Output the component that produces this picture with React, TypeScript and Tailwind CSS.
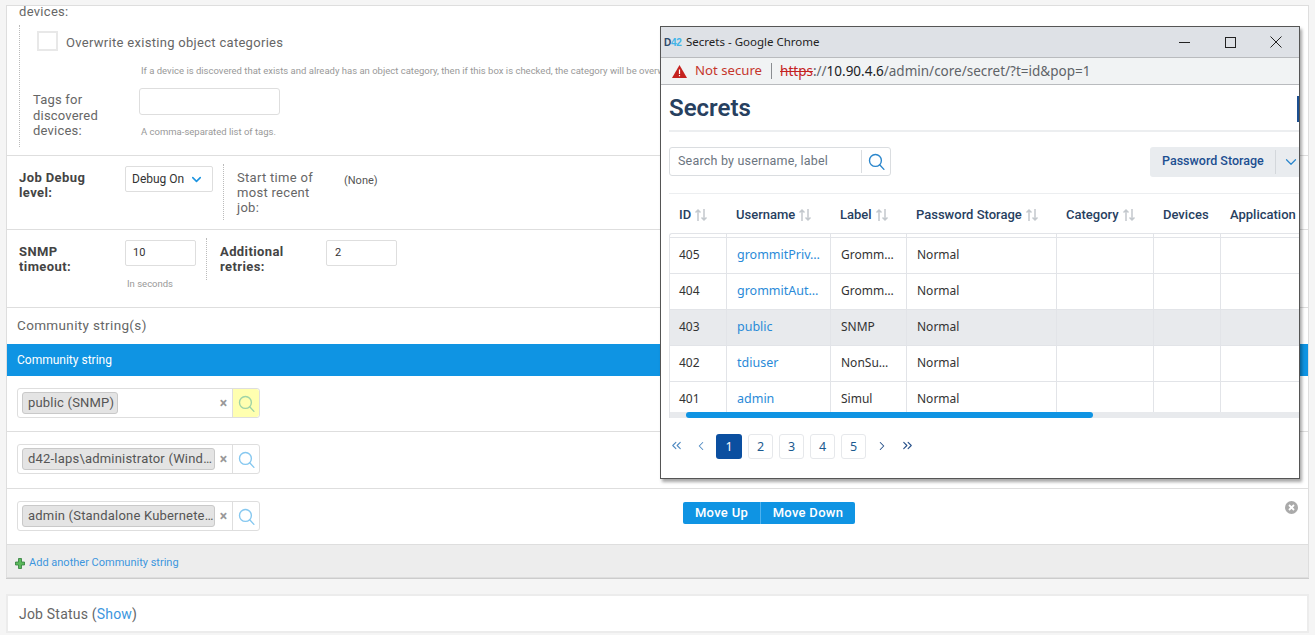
import React from "react";
import { ChevronDown, ChevronsLeft, ChevronLeft, ChevronRight, ChevronsRight } from "lucide-react";

const Glass = ({ className = "" }: { className?: string }) => (
  <svg viewBox="0 0 16 16" width="17" height="17" fill="none" stroke="currentColor" strokeWidth="1.3" className={className}>
    <circle cx="7" cy="7" r="5.6" />
    <path d="M11 11l4 4.4" strokeLinecap="round" />
  </svg>
);

const Sort = () => (
  <span className="inline-flex ml-[3px] text-[#c3c8cd]">
    <svg width="14" height="14" viewBox="0 0 14 14" fill="none" stroke="currentColor" strokeWidth="1.5">
      <path d="M4 13V2M1.5 4.5L4 2l2.5 2.5" />
      <path d="M10 1v11M7.5 9.5L10 12l2.5-2.5" />
    </svg>
  </span>
);

const Lookup = ({ label, yellow, tagW }: { label: string; yellow?: boolean; tagW: string }) => (
  <div className="flex items-stretch w-[243px] h-[30px] border border-[#dedede] rounded-[3px] bg-white shrink-0">
    <div className="flex-1 flex items-center pl-[4px] min-w-0">
      <span className={`${tagW} h-[22px] bg-[#e4e4e4] border border-[#c9c9c9] rounded-[3px] text-[#555] text-[13px] tracking-[0.2px] pl-[5px] flex items-center whitespace-nowrap overflow-hidden`}>{label}</span>
    </div>
    <span className="w-[17px] flex items-center justify-center text-[#999] font-bold text-[14px]">×</span>
    <span className={`w-[27px] flex items-center justify-center border-l border-[#dedede] rounded-r-[3px] ${yellow ? "bg-[#ffffb0] text-[#9fd3a6]" : "text-[#86c8f0]"}`}>
      <Glass />
    </span>
  </div>
);

const rows = [
  ["405", "grommitPriv…", "Gromm…"],
  ["404", "grommitAut…", "Gromm…"],
  ["403", "public", "SNMP"],
  ["402", "tdiuser", "NonSu…"],
  ["401", "admin", "Simul"],
];

const cols = "grid grid-cols-[57px_104px_76px_150px_97px_67px_1fr]";
const headers: [string, boolean][] = [
  ["ID", true],
  ["Username", true],
  ["Label", true],
  ["Password Storage", true],
  ["Category", true],
  ["Devices", false],
  ["Application", false],
];

function Popup() {
  return (
    <div className="absolute left-[660px] top-[26px] w-[640px] h-[453px] bg-white border border-[#555] shadow-[2px_3px_3px_rgba(0,0,0,0.35)] flex flex-col overflow-hidden">
      <div className="h-[31px] bg-[#dee1e6] flex items-center pl-[3px] shrink-0 border-b border-[#b9bbbe]">
        <span className="text-[10px] font-bold font-['Liberation_Sans',sans-serif] w-[19px] tracking-[-0.3px]"><span className="text-[#2d4a6b]">D</span><span className="text-[#3fb4e8]">42</span></span>
        <span className="text-[11.5px] text-[#222] font-['Noto_Sans',sans-serif] ml-[3px]">Secrets - Google Chrome</span>
        <div className="ml-auto flex items-center text-[#222]">
          <svg width="11" height="11" viewBox="0 0 11 11" stroke="currentColor" fill="none" className="mr-[35px]"><path d="M0 5.5h11" /></svg>
          <svg width="11" height="11" viewBox="0 0 11 11" stroke="currentColor" fill="none" className="mr-[34px]"><rect x="0.5" y="0.5" width="10" height="10" /></svg>
          <svg width="12" height="12" viewBox="0 0 12 12" stroke="currentColor" fill="none" className="mr-[17px]"><path d="M0.5 0.5l11 11M11.5 0.5l-11 11" /></svg>
        </div>
      </div>
      <div className="h-[27px] bg-[#f1f3f4] border-b border-[#b9bbbe] flex items-center pl-[11px] shrink-0 font-['Noto_Sans',sans-serif]">
        <svg width="15" height="13" viewBox="0 0 15 13"><path d="M7.5 0L15 13H0z" fill="#c5221f" /><path d="M6.9 4.5h1.2v4.5H6.9zM6.9 10h1.2v1.3H6.9z" fill="#fff" /></svg>
        <span className="text-[#c5362c] ml-[8px] text-[13.2px]">Not secure</span>
        <span className="w-px h-[16px] bg-[#8a8d91] ml-[9px] mr-[8px]" />
        <span className="text-[13.5px] text-[#5f6368] whitespace-nowrap"><span className="text-[#c5221f] line-through">https</span>://<span className="text-[#202124]">10.90.4.6</span>/admin/core/secret/?t=id&amp;pop=1</span>
      </div>
      <div className="flex-1 pl-[8px] relative">
        <div className="absolute right-0 top-[11px] w-[2px] h-[26px] bg-[#1c4f91]" />
        <div className="h-[47px] border-b-2 border-[#eceef0] flex items-center">
          <h1 className="text-[24px] font-semibold text-[#27405f] leading-none">Secrets</h1>
        </div>
        <div className="h-[62px] border-b border-[#eceef0] flex items-center justify-between">
          <div className="w-[222px] h-[29px] border border-[#dadde0] rounded-[3px] flex items-center -mt-[2px]">
            <span className="flex-1 pl-[8px] text-[12.5px] text-[#6b7580] tracking-[0.2px]">Search by username, label</span>
            <span className="w-[29px] h-[23px] border-l border-[#dadde0] flex items-center justify-center text-[#2a86cc]"><Glass /></span>
          </div>
          <div className="w-[149px] h-[30px] -mt-[2px] bg-[#e9ecef] rounded-l-[3px] flex items-center text-[#1c4f91] text-[12.5px] font-medium">
            <span className="w-[126px] h-[24px] shrink-0 pl-[12px] border-r border-[#d3d7db] flex items-center whitespace-nowrap">Password Storage</span>
            <ChevronDown size={18} strokeWidth={1.6} className="ml-[6px] shrink-0 text-[#2a86cc]" />
          </div>
        </div>
        <div className={`${cols} h-[39px] pt-[3px] items-center text-[13px] font-medium text-[#27405f] whitespace-nowrap`}>
          {headers.map(([h, s]) => (
            <div key={h} className="pl-[10px] flex items-center">{h}{s && <Sort />}</div>
          ))}
        </div>
        <div className="border-t border-l border-[#e2e4e8] rounded-tl-[3px]">
          <div className={`${cols} h-[3px]`}>
            {headers.map(([h]) => <div key={h} className="border-r border-[#e2e4e8] last:border-r-0" />)}
          </div>
          {rows.map((r, i) => {
            const pad = i === 4 ? "pt-[4px]" : "pb-[2px]";
            const linkPad = i === 4 ? "pt-[4px]" : "";
            return (
              <div key={r[0]} className={`${cols} ${i === 4 ? "h-[31px]" : "h-[36px]"} border-t border-[#e2e4e8] text-[12px] text-[#333] font-['Noto_Sans',sans-serif] ${r[0] === "403" ? "bg-[#e8eaed]" : ""}`}>
                <div className={`pl-[9px] flex items-center border-r border-[#e2e4e8] ${pad}`}>{r[0]}</div>
                <div className={`pl-[10px] flex items-center border-r border-[#e2e4e8] text-[12.5px] text-[#2a8ad8] whitespace-nowrap overflow-hidden ${linkPad}`}>{r[1]}</div>
                <div className={`pl-[10px] flex items-center border-r border-[#e2e4e8] whitespace-nowrap overflow-hidden ${pad}`}>{r[2]}</div>
                <div className={`pl-[10px] flex items-center border-r border-[#e2e4e8] ${pad}`}>Normal</div>
                <div className="border-r border-[#e2e4e8]" />
                <div className="border-r border-[#e2e4e8]" />
                <div />
              </div>
            );
          })}
          <div className="h-[6px] bg-[#e8eaed] pl-[16px]">
            <div className="w-[407px] h-full rounded-[3px] bg-[#0f94e3]" />
          </div>
        </div>
        <div className="flex items-center mt-[16px] h-[25px] text-[#1c5a8f] text-[12.5px] font-['Noto_Sans',sans-serif]">
          <ChevronsLeft size={15} strokeWidth={1.8} className="text-[#4f8ac2] -mt-[2px]" />
          <ChevronLeft size={14} strokeWidth={1.8} className="text-[#4f8ac2] ml-[10px] -mt-[2px]" />
          <span className="w-[26px] h-[25px] ml-[8px] bg-[#0b4fa0] text-white rounded-[3px] flex items-center justify-center pt-[1px]">1</span>
          {["2", "3", "4", "5"].map((n) => (
            <span key={n} className="w-[25px] h-[25px] ml-[6px] border border-[#e6e8eb] rounded-[3px] flex items-center justify-center pt-[1px]">{n}</span>
          ))}
          <ChevronRight size={14} strokeWidth={1.8} className="text-[#27518a] ml-[9px] -mt-[2px]" />
          <ChevronsRight size={15} strokeWidth={1.8} className="text-[#27518a] ml-[11px] -mt-[2px]" />
        </div>
      </div>
    </div>
  );
}

const Plus = () => (
  <svg width="10" height="11" viewBox="0 0 10 11" className="shrink-0">
    <path d="M3.5 0.5h3v3.5h3v3h-3v3.5h-3V7h-3V4h3z" fill="#5cb85c" stroke="#2f7d3a" strokeWidth="0.8" />
  </svg>
);

export default function App() {
  return (
    <div className="w-[1315px] h-[635px] bg-[#f5f5f5] relative overflow-hidden font-['Roboto',sans-serif] text-[#666] pt-[5px] pl-[6px]">
      <div className="w-[1303px] bg-white border-t border-x border-[#dedede]">
        <section className="h-[150px] border-b border-[#dedede] pl-[12px]">
          <div className="text-[13px] leading-[11px] tracking-[0.3px]">devices:</div>
          <div className="mt-[8px] h-[122px] border-l border-dotted border-[#bbb] pl-[13px] pt-[6px]">
            <div className="flex items-center ml-[4px] h-[19px]">
              <span className="w-[21px] h-[20px] border-2 border-[#e8e8e8] bg-white shrink-0" />
              <span className="ml-[8px] mt-[4px] text-[13px] tracking-[0.3px]">Overwrite existing object categories</span>
            </div>
            <div className="ml-[108px] mt-[15px] text-[9.5px] leading-[12px] text-[#999] whitespace-nowrap">If a device is discovered that exists and already has an object category, then if this box is checked, the category will be overwritten.</div>
            <div className="flex mt-[11px]">
              <div className="w-[106px] pt-[4px] text-[13px] leading-[15.5px] tracking-[0.2px]">Tags for<br />discovered<br />devices:</div>
              <div>
                <div className="w-[141px] h-[27px] border border-[#dedede] rounded-[3px] bg-white" />
                <div className="ml-[2px] mt-[11px] text-[9.5px] leading-[12px] text-[#999]">A comma-separated list of tags.</div>
              </div>
            </div>
          </div>
        </section>

        <section className="h-[74px] border-b border-[#dedede] pl-[12px] pt-[10px] flex">
          <div className="w-[106px] pt-[4px] text-[13px] leading-[15px] font-bold text-[#444] tracking-[0.4px]">Job Debug<br />level:</div>
          <div className="w-[88px] h-[26px] border border-[#dedede] rounded-[2px] flex items-center pl-[6px] text-[12px] text-[#333] justify-between pr-[8px]">
            Debug On
            <ChevronDown size={15} strokeWidth={2.5} className="text-[#1c94e0]" />
          </div>
          <div className="ml-[10px] h-[56px] -mt-[2px] border-l border-dotted border-[#bbb] pl-[13px] pt-[6px] w-[121px] text-[13px] leading-[15px] tracking-[0.3px]">Start time of<br />most recent<br />job:</div>
          <div className="text-[11px] text-[#555] pt-[7px]">(None)</div>
        </section>

        <section className="h-[78px] border-b border-[#dedede] pl-[12px] pt-[10px] flex">
          <div className="w-[106px] pt-[4px] text-[13px] leading-[15px] font-bold text-[#444] tracking-[0.4px]">SNMP<br />timeout:</div>
          <div className="w-[71px]">
            <div className="w-[71px] h-[26px] border border-[#dedede] rounded-[2px] flex items-center pl-[7px] pt-[1px] text-[11px] text-[#333]">10</div>
            <div className="ml-[2px] mt-[12px] text-[9.5px] text-[#999] leading-[12px]">In seconds</div>
          </div>
          <div className="ml-[10px] h-[42px] -mt-[2px] border-l border-dotted border-[#bbb] pl-[13px] pt-[6px] w-[120px] text-[13px] leading-[15px] font-bold text-[#444] tracking-[0.4px]">Additional<br />retries:</div>
          <div className="w-[71px] h-[26px] border border-[#dedede] rounded-[2px] flex items-center pl-[8px] pt-[1px] text-[11px] text-[#333]">2</div>
        </section>

        <div className="h-[36px] pl-[10px] pb-[2px] flex items-center text-[13.5px] tracking-[0.35px]">Community string(s)</div>
        <div className="h-[32px] bg-[#0f94e3] pl-[10px] flex items-center text-white text-[12px]">Community string</div>

        <div className="h-[56px] border-b border-[#dedede] pl-[10px] pt-[12px]">
          <Lookup label="public (SNMP)" yellow tagW="w-[96px]" />
        </div>
        <div className="h-[57px] border-b border-[#dedede] pl-[10px] pt-[12px]">
          <Lookup label="d42-laps\administrator (Wind…" tagW="w-[193px]" />
        </div>
        <div className="h-[55px] pl-[10px] pt-[12px] flex items-start">
          <Lookup label="admin (Standalone Kubernete…" tagW="w-[193px]" />
          <div className="ml-[423px] mt-[1px] flex h-[22px] text-white text-[13px] font-medium tracking-[0.3px]">
            <span className="w-[77px] bg-[#0f94e3] rounded-l-[2px] flex items-center justify-center">Move Up</span>
            <span className="w-[95px] bg-[#0f94e3] rounded-r-[2px] border-l border-[#4fb2ee] flex items-center justify-center">Move Down</span>
          </div>
          <svg width="13" height="13" viewBox="0 0 13 13" className="ml-[430px]">
            <circle cx="6.5" cy="6.5" r="6.5" fill="#aaa" />
            <path d="M4 4l5 5M9 4l-5 5" stroke="#fff" strokeWidth="1.8" />
          </svg>
        </div>
      </div>
      <div className="w-[1303px] h-[34px] bg-[#ededed] border border-[#dedede] pl-[8px] pt-[4px] flex items-center text-[11px] text-[#3c96de] shadow-[0_1px_0_#ccc]">
        <Plus />
        <span className="ml-[4px]">Add another Community string</span>
      </div>
      <div className="w-[1303px] h-[39px] mt-[16px] bg-white border-2 border-[#ececec] pl-[11px] pt-[1px] flex items-center text-[14px] tracking-[0.2px]">
        Job Status (<span className="text-[#3c96de]">Show</span>)
      </div>
      <Popup />
    </div>
  );
}
